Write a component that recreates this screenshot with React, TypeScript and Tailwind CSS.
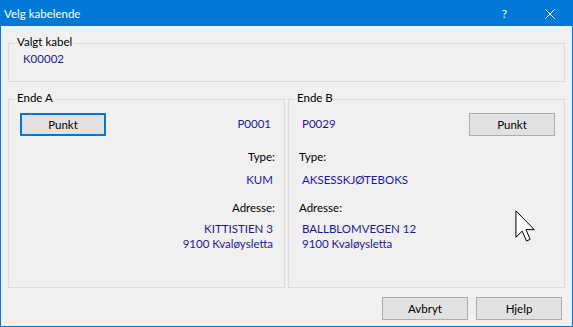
const navy = 'text-[#1c1a96]'

function Btn({ label, focused }: { label: string; focused?: boolean }) {
  return (
    <div
      className={
        'w-[86px] h-[23px] flex items-center justify-center bg-[#e1e1e1] text-black ' +
        (focused ? 'border-2 border-[#0078d7]' : 'border border-[#adadad]')
      }
    >
      {label}
    </div>
  )
}

function Group({ title, className, children }: { title: string; className?: string; children?: React.ReactNode }) {
  return (
    <div className={'border border-[#dcdcdc] flex flex-col ' + (className ?? '')}>
      <div className="-mt-[10px] ml-[6px] px-[2px] w-fit bg-[#f0f0f0]">{title}</div>
      {children}
    </div>
  )
}

function Cursor() {
  return (
    <svg className="absolute left-[514px] top-[209px]" width="20" height="33" viewBox="0 0 12 20">
      <path
        d="M0.5 0.5 L0.5 16.5 L4.3 12.8 L6.9 18.8 L9.1 17.8 L6.6 11.9 L11.6 11.9 Z"
        fill="#fff"
        stroke="#000"
        strokeWidth="1"
        vectorEffect="non-scaling-stroke"
        strokeLinejoin="miter"
      />
    </svg>
  )
}

export default function App() {
  return (
    <div className="relative w-[573px] h-[327px] border border-[#0078d7] bg-[#f0f0f0] flex flex-col text-[11.5px] leading-[15px] text-black font-['Segoe_UI',Lato,sans-serif]">
      {/* title bar */}
      <div className="h-[25px] bg-[#0078d7] flex items-center text-white pl-[3px] pr-[17px]">
        <span>Velg kabelende</span>
        <span className="ml-auto mr-[38px] text-[12px]">?</span>
        <svg width="10" height="10" viewBox="0 0 10 10">
          <path d="M0.5 0.5 L9.5 9.5 M9.5 0.5 L0.5 9.5" stroke="#fff" strokeWidth="1" />
        </svg>
      </div>

      <div className="flex-1 flex flex-col px-[7px]">
        <Group title="Valgt kabel" className="mt-[17px] h-[39px]">
          <div className={'mt-[2px] pl-[14px] ' + navy}>K00002</div>
        </Group>

        <div className="mt-[17px] flex gap-[3px] h-[189px]">
          {/* Ende A */}
          <Group title="Ende A" className="w-[277px]">
            <div className="mt-[8px] pl-[11px] pr-[13px] flex justify-between items-start">
              <Btn label="Punkt" focused />
              <span className={'mt-[3px] ' + navy}>P0001</span>
            </div>
            <div className="flex flex-col items-end">
              <span className="mt-[13px] pr-[9px]">Type:</span>
              <span className={'mt-[8px] pr-[11px] ' + navy}>KUM</span>
              <span className="mt-[13px] pr-[9px]">Adresse:</span>
              <span className={'mt-[6px] pr-[11px] text-right ' + navy}>
                KITTISTIEN 3
                <br />
                9100 Kvaløysletta
              </span>
            </div>
          </Group>

          {/* Ende B */}
          <Group title="Ende B" className="w-[277px]">
            <div className="mt-[8px] pl-[13px] pr-[9px] flex justify-between items-start">
              <span className={'mt-[3px] ' + navy}>P0029</span>
              <Btn label="Punkt" />
            </div>
            <div className="flex flex-col items-start">
              <span className="mt-[13px] pl-[10px]">Type:</span>
              <span className={'mt-[8px] pl-[13px] ' + navy}>AKSESSKJØTEBOKS</span>
              <span className="mt-[13px] pl-[10px]">Adresse:</span>
              <span className={'mt-[6px] pl-[13px] ' + navy}>
                BALLBLOMVEGEN 12
                <br />
                9100 Kvaløysletta
              </span>
            </div>
          </Group>
        </div>

        <div className="mt-[9px] flex justify-end gap-[8px] pr-[3px]">
          <Btn label="Avbryt" />
          <Btn label="Hjelp" />
        </div>
      </div>

      <Cursor />
    </div>
  )
}
